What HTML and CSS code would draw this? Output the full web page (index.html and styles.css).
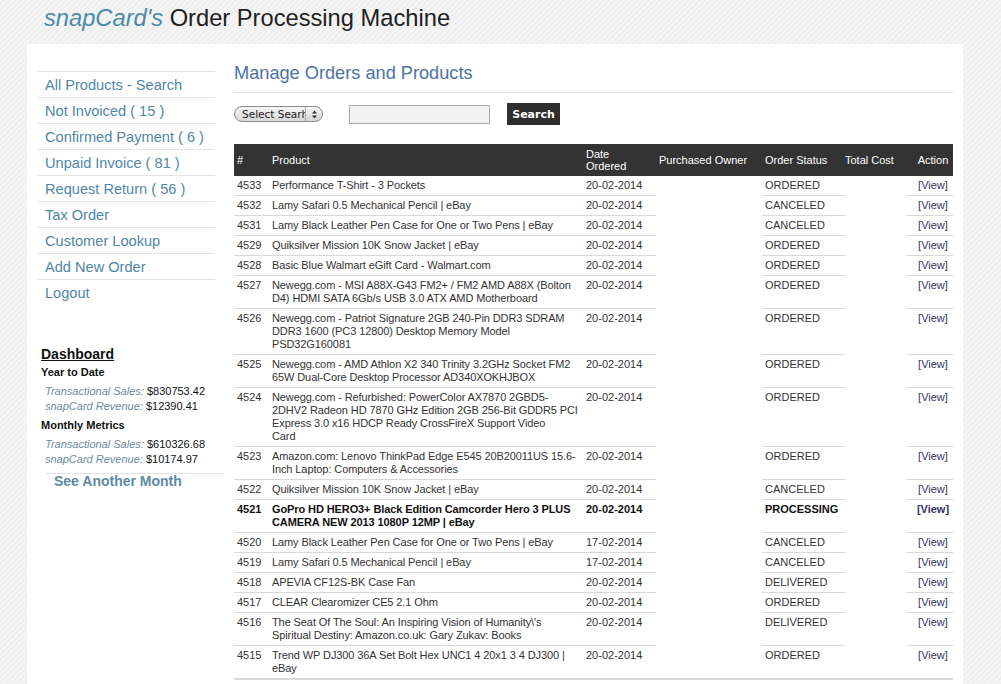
FILE: index.html
```html
<!DOCTYPE html>
<html>
<head>
<meta charset="utf-8">
<title>snapCard's Order Processing Machine</title>
<link rel="stylesheet" href="styles.css">
</head>
<body>
<header class="site-header">
  <h1 class="site-title"><em class="brand">snapCard's</em> Order Processing Machine</h1>
</header>
<div class="container">
  <aside class="sidebar">
    <ul class="nav">
      <li><a href="#">All Products - Search</a></li>
      <li><a href="#">Not Invoiced ( 15 )</a></li>
      <li><a href="#">Confirmed Payment ( 6 )</a></li>
      <li><a href="#">Unpaid Invoice ( 81 )</a></li>
      <li><a href="#">Request Return ( 56 )</a></li>
      <li><a href="#">Tax Order</a></li>
      <li><a href="#">Customer Lookup</a></li>
      <li><a href="#">Add New Order</a></li>
      <li><a href="#">Logout</a></li>
    </ul>
    <div class="dashboard">
      <h3 class="dash-title">Dashboard</h3>
      <h4 class="dash-sub">Year to Date</h4>
      <div class="metrics">
        <div><span class="label">Transactional Sales:</span> $830753.42</div>
        <div><span class="label">snapCard Revenue:</span> $12390.41</div>
      </div>
      <h4 class="dash-sub">Monthly Metrics</h4>
      <div class="metrics">
        <div><span class="label">Transactional Sales:</span> $610326.68</div>
        <div><span class="label">snapCard Revenue:</span> $10174.97</div>
      </div>
      <a class="another" href="#">See Another Month</a>
    </div>
  </aside>
  <main class="main">
    <h2 class="page-title">Manage Orders and Products</h2>
    <hr class="rule">
    <form class="search-bar">
      <div class="select"><span class="select-text">Select Searh</span><span class="select-arrows"><svg width="7" height="9" viewBox="0 0 7 9"><path d="M3.5 0.5 L6 3.5 H1 Z M3.5 8.5 L6 5.5 H1 Z" fill="#333"/></svg></span></div>
      <input class="search-input" type="text">
      <button class="search-btn" type="button">Search</button>
    </form>
    <table class="orders">
      <colgroup>
        <col class="c-id"><col class="c-prod"><col class="c-date"><col class="c-owner"><col class="c-status"><col class="c-cost"><col class="c-action">
      </colgroup>
      <thead>
        <tr><th>#</th><th>Product</th><th class="th-date">Date Ordered</th><th>Purchased Owner</th><th>Order Status</th><th class="th-cost">Total Cost</th><th class="act">Action</th></tr>
      </thead>
      <tbody>
        <tr><td>4533</td><td class="prod">Performance T-Shirt - 3 Pockets</td><td>20-02-2014</td><td class="e"></td><td>ORDERED</td><td class="e"></td><td class="act"><a href="#">[View]</a></td></tr>
        <tr><td>4532</td><td class="prod">Lamy Safari 0.5 Mechanical Pencil | eBay</td><td>20-02-2014</td><td class="e"></td><td>CANCELED</td><td class="e"></td><td class="act"><a href="#">[View]</a></td></tr>
        <tr><td>4531</td><td class="prod">Lamy Black Leather Pen Case for One or Two Pens | eBay</td><td>20-02-2014</td><td class="e"></td><td>CANCELED</td><td class="e"></td><td class="act"><a href="#">[View]</a></td></tr>
        <tr><td>4529</td><td class="prod">Quiksilver Mission 10K Snow Jacket | eBay</td><td>20-02-2014</td><td class="e"></td><td>ORDERED</td><td class="e"></td><td class="act"><a href="#">[View]</a></td></tr>
        <tr><td>4528</td><td class="prod">Basic Blue Walmart eGift Card - Walmart.com</td><td>20-02-2014</td><td class="e"></td><td>ORDERED</td><td class="e"></td><td class="act"><a href="#">[View]</a></td></tr>
        <tr><td>4527</td><td class="prod">Newegg.com - MSI A88X-G43 FM2+ / FM2 AMD A88X (Bolton D4) HDMI SATA 6Gb/s USB 3.0 ATX AMD Motherboard</td><td>20-02-2014</td><td class="e"></td><td>ORDERED</td><td class="e"></td><td class="act"><a href="#">[View]</a></td></tr>
        <tr><td>4526</td><td class="prod">Newegg.com - Patriot Signature 2GB 240-Pin DDR3 SDRAM DDR3 1600 (PC3 12800) Desktop Memory Model PSD32G160081</td><td>20-02-2014</td><td class="e"></td><td>ORDERED</td><td class="e"></td><td class="act"><a href="#">[View]</a></td></tr>
        <tr><td>4525</td><td class="prod">Newegg.com - AMD Athlon X2 340 Trinity 3.2GHz Socket FM2 65W Dual-Core Desktop Processor AD340XOKHJBOX</td><td>20-02-2014</td><td class="e"></td><td>ORDERED</td><td class="e"></td><td class="act"><a href="#">[View]</a></td></tr>
        <tr><td>4524</td><td class="prod">Newegg.com - Refurbished: PowerColor AX7870 2GBD5-2DHV2 Radeon HD 7870 GHz Edition 2GB 256-Bit GDDR5 PCI Express 3.0 x16 HDCP Ready CrossFireX Support Video<br>Card</td><td>20-02-2014</td><td class="e"></td><td>ORDERED</td><td class="e"></td><td class="act"><a href="#">[View]</a></td></tr>
        <tr><td>4523</td><td class="prod">Amazon.com: Lenovo ThinkPad Edge E545 20B20011US 15.6-Inch Laptop: Computers &amp; Accessories</td><td>20-02-2014</td><td class="e"></td><td>ORDERED</td><td class="e"></td><td class="act"><a href="#">[View]</a></td></tr>
        <tr><td>4522</td><td class="prod">Quiksilver Mission 10K Snow Jacket | eBay</td><td>20-02-2014</td><td class="e"></td><td>CANCELED</td><td class="e"></td><td class="act"><a href="#">[View]</a></td></tr>
        <tr class="hot"><td>4521</td><td class="prod">GoPro HD HERO3+ Black Edition Camcorder Hero 3 PLUS CAMERA NEW 2013 1080P 12MP | eBay</td><td>20-02-2014</td><td class="e"></td><td>PROCESSING</td><td class="e"></td><td class="act"><a href="#">[View]</a></td></tr>
        <tr><td>4520</td><td class="prod">Lamy Black Leather Pen Case for One or Two Pens | eBay</td><td>17-02-2014</td><td class="e"></td><td>CANCELED</td><td class="e"></td><td class="act"><a href="#">[View]</a></td></tr>
        <tr><td>4519</td><td class="prod">Lamy Safari 0.5 Mechanical Pencil | eBay</td><td>17-02-2014</td><td class="e"></td><td>CANCELED</td><td class="e"></td><td class="act"><a href="#">[View]</a></td></tr>
        <tr><td>4518</td><td class="prod">APEVIA CF12S-BK Case Fan</td><td>20-02-2014</td><td class="e"></td><td>DELIVERED</td><td class="e"></td><td class="act"><a href="#">[View]</a></td></tr>
        <tr><td>4517</td><td class="prod">CLEAR Clearomizer CE5 2.1 Ohm</td><td>20-02-2014</td><td class="e"></td><td>ORDERED</td><td class="e"></td><td class="act"><a href="#">[View]</a></td></tr>
        <tr><td>4516</td><td class="prod">The Seat Of The Soul: An Inspiring Vision of Humanity\'s Spiritual Destiny: Amazon.co.uk: Gary Zukav: Books</td><td>20-02-2014</td><td class="e"></td><td>DELIVERED</td><td class="e"></td><td class="act"><a href="#">[View]</a></td></tr>
        <tr class="last"><td>4515</td><td class="prod">Trend WP DJ300 36A Set Bolt Hex UNC1 4 20x1 3 4 DJ300 | eBay</td><td>20-02-2014</td><td></td><td>ORDERED</td><td></td><td class="act"><a href="#">[View]</a></td></tr>
      </tbody>
    </table>
  </main>
</div>
</body>
</html>
```

FILE: styles.css
```css
html, body {
  margin: 0;
  padding: 0;
}
body {
  font-family: "Liberation Sans", Arial, sans-serif;
  color: #333;
  background-color: #f3f3f3;
  background-image: repeating-linear-gradient(135deg, #f5f5f5 0px, #f5f5f5 2px, #efefef 2px, #efefef 4px);
  min-height: 684px;
}
.site-header {
  height: 44px;
  padding-left: 44px;
  box-sizing: border-box;
}
.site-title {
  margin: 0;
  padding-top: 4px;
  font-size: 23.7px;
  line-height: 28px;
  font-weight: normal;
  color: #222;
}
.brand {
  color: #4b8aab;
}
.container {
  margin-left: 27px;
  width: 936px;
  background: #fff;
  display: flex;
  gap: 19px;
  padding: 0 10px;
  box-sizing: border-box;
  min-height: 640px;
}
.sidebar {
  width: 178px;
  flex: none;
  padding-top: 27px;
}
.nav {
  list-style: none;
  margin: 0;
  padding: 0;
}
.nav li {
  border-top: 1px solid #e4e4e4;
  height: 25px;
}
.nav a {
  display: block;
  padding-left: 8px;
  font-size: 14.6px;
  line-height: 26px;
  height: 25px;
  color: #4f86a8;
  text-decoration: none;
}
.dashboard {
  margin-top: 41px;
  padding-left: 4px;
  width: 183px;
}
.dash-title {
  margin: 0;
  font-size: 14px;
  line-height: 17px;
  font-weight: bold;
  color: #111;
  text-decoration: underline;
}
.dash-sub {
  margin: 1px 0 0;
  font-size: 11px;
  line-height: 16px;
  font-weight: bold;
  color: #111;
}
.metrics {
  margin: 4px 0 3px;
  padding-left: 4px;
  font-size: 11px;
  line-height: 15px;
  color: #111;
}
.metrics .label {
  font-style: italic;
  color: #6c8aa0;
}
.another {
  display: block;
  margin-left: 4px;
  margin-top: 6px;
  border-top: 1px solid #e2e2e2;
  padding-left: 9px;
  padding-top: 0;
  font-size: 14px;
  line-height: 14px;
  font-weight: bold;
  color: #5b8aa6;
  text-decoration: none;
}
.main {
  flex: 1;
  padding-top: 18px;
  min-width: 0;
}
.page-title {
  margin: 0;
  font-size: 18.2px;
  line-height: 22px;
  font-weight: normal;
  color: #4d72a8;
}
.rule {
  margin: 8px 0 0;
  border: 0;
  border-top: 1px solid #e0e0e0;
  height: 0;
}
.search-bar {
  display: flex;
  align-items: center;
  margin: 10px 0 0;
  height: 22px;
}
.select {
  width: 89px;
  height: 16px;
  box-sizing: border-box;
  border: 1px solid #8a8a8a;
  border-radius: 8px;
  background: linear-gradient(#f6f6f6, #d6d6d6);
  display: flex;
  align-items: center;
  font-family: "DejaVu Sans", sans-serif;
  font-size: 10.5px;
  color: #222;
  overflow: hidden;
}
.select-text {
  flex: 1;
  padding-left: 7px;
  white-space: nowrap;
  overflow: hidden;
  line-height: 14px;
}
.select-arrows {
  width: 16px;
  height: 14px;
  border-left: 1px solid #aaa;
  display: flex;
  align-items: center;
  justify-content: center;
  flex: none;
}
.search-input {
  margin: 0 0 0 26px;
  width: 141px;
  height: 19px;
  box-sizing: border-box;
  border: 1px solid #a9a9a9;
  background: #f2f2f2;
  padding: 0;
}
.search-btn {
  margin-left: 17px;
  width: 53px;
  height: 22px;
  border: 0;
  background: #2e2e2e;
  color: #fff;
  font-family: "DejaVu Sans", sans-serif;
  font-weight: bold;
  font-size: 11px;
  padding: 0;
}
.orders {
  margin-top: 19px;
  width: 100%;
  border-collapse: collapse;
  table-layout: fixed;
  font-size: 11px;
}
.c-id { width: 35px; }
.c-prod { width: 314px; }
.c-date { width: 73px; }
.c-owner { width: 106px; }
.c-status { width: 83px; }
.c-cost { width: 62px; }
.c-action { width: 46px; }
.orders th {
  background: #333;
  color: #fff;
  font-weight: normal;
  text-align: left;
  height: 32px;
  padding: 0 3px;
  line-height: 12px;
  vertical-align: middle;
  box-sizing: border-box;
}
.orders th.th-date {
  padding-right: 14px;
}
.orders th.th-cost {
  padding-left: 0;
}
.orders td {
  padding: 3px 3px 3px;
  line-height: 13px;
  vertical-align: top;
  border-bottom: 1px solid #d9d9d9;
  color: #333;
}
.orders td.prod {
  padding-right: 0;
  letter-spacing: -0.1px;
}
.orders td.e {
  border-bottom: 0;
}
.orders tr.last td {
  border-bottom: 2px solid #d9d9d9;
}
.orders .act,
.orders th.act {
  text-align: center;
  padding-left: 6px;
  padding-right: 0;
}
.orders td a {
  color: #333366;
  text-decoration: none;
}
.orders tr.hot td {
  font-weight: bold;
  color: #111;
}
```
